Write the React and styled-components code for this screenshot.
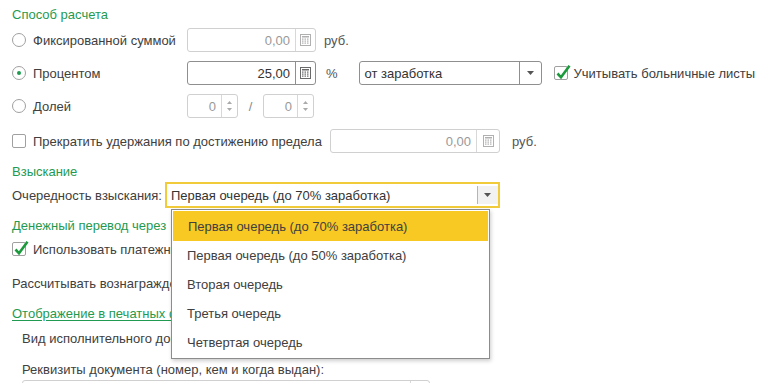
import React from 'react';
import styled, { createGlobalStyle } from 'styled-components';

const GlobalStyle = createGlobalStyle`
  html, body {
    margin: 0;
    padding: 0;
    background: #fff;
    overflow: hidden;
  }
  body {
    font-family: 'Liberation Sans', Arial, sans-serif;
    font-size: 13px;
    color: #404040;
  }
`;

const Page = styled.div`
  width: 780px;
  height: 383px;
  padding-left: 12px;
  box-sizing: border-box;
  overflow: hidden;
`;

const Row = styled.div`
  display: flex;
  align-items: center;
  height: ${(p) => p.$h || 24}px;
  margin-top: ${(p) => p.$mt || 0}px;
  padding-left: ${(p) => p.$indent || 0}px;
  white-space: nowrap;
  position: relative;
`;

const Heading = styled.div`
  color: #1f9a50;
  line-height: 18px;
  height: 18px;
  margin-top: ${(p) => p.$mt || 0}px;
  white-space: nowrap;
  ${(p) => p.$link && 'text-decoration: underline; text-underline-offset: 2px;'}
`;

const LabelCol = styled.div`
  display: flex;
  align-items: center;
  gap: 7px;
  width: ${(p) => p.$w || 175}px;
  flex-shrink: 0;
`;

const Radio = styled.span`
  width: 14px;
  height: 14px;
  box-sizing: border-box;
  border: 1px solid #a0a0a0;
  border-radius: 50%;
  display: inline-flex;
  align-items: center;
  justify-content: center;
  background: #fff;
  flex-shrink: 0;
  &::after {
    content: '';
    display: ${(p) => (p.$on ? 'block' : 'none')};
    width: 4px;
    height: 4px;
    border-radius: 50%;
    background: #1f9a50;
  }
`;

const Box = styled.span`
  width: 14px;
  height: 14px;
  box-sizing: border-box;
  border: 1px solid #a0a0a0;
  border-radius: 2px;
  background: #fff;
  position: relative;
  flex-shrink: 0;
  svg {
    position: absolute;
    left: 0px;
    top: -3px;
  }
`;

const Field = styled.div`
  display: flex;
  align-items: stretch;
  width: ${(p) => p.$w}px;
  height: 24px;
  box-sizing: border-box;
  border: 1px solid ${(p) => (p.$active ? '#8f8f8f' : '#d0d0d0')};
  border-radius: 3px;
  background: #fff;
  flex-shrink: 0;
`;

const Value = styled.div`
  flex: 1;
  display: flex;
  align-items: center;
  justify-content: ${(p) => (p.$left ? 'flex-start' : 'flex-end')};
  padding: 0 5px;
  color: ${(p) => (p.$active ? '#333' : '#999')};
  overflow: hidden;
`;

const SideBtn = styled.div`
  width: ${(p) => p.$w || 19}px;
  border-left: 1px solid ${(p) => (p.$active ? '#8f8f8f' : '#d8d8d8')};
  display: flex;
  flex-direction: ${(p) => (p.$col ? 'column' : 'row')};
  align-items: center;
  justify-content: center;
  background: ${(p) => p.$bg || 'transparent'};
  gap: 4px;
`;

const Unit = styled.span`
  margin-left: ${(p) => p.$ml}px;
  color: #555;
`;

const Slash = styled.span`
  color: #888;
  width: 25px;
  text-align: center;
`;

const FocusSelect = styled.div`
  position: relative;
  display: flex;
  width: 335px;
  height: 26px;
  box-sizing: border-box;
  border: 2px solid #f2cb3a;
  background: #fff;
  margin-left: 3px;
`;

const Dropdown = styled.div`
  position: absolute;
  left: 4px;
  top: 25px;
  width: 319px;
  box-sizing: border-box;
  border: 1px solid #8c8c8c;
  background: #fff;
  box-shadow: 1px 2px 4px rgba(0, 0, 0, 0.2);
  padding: 1px 0 1px;
  z-index: 5;
`;

const Item = styled.div`
  height: ${(p) => (p.$first ? 30 : 29)}px;
  display: flex;
  align-items: center;
  padding-left: 15px;
  background: ${(p) => (p.$sel ? '#f8c823' : '#fff')};
  color: #404040;
  margin: ${(p) => (p.$sel ? '0 1px' : '0')};
`;

const CalcIcon = ({ active }) => {
  const c = active ? '#6a6a6a' : '#b0b0b0';
  const dots = [];
  for (let r = 0; r < 3; r++) {
    for (let k = 0; k < 3; k++) {
      dots.push(<rect key={`${r}${k}`} x={2 + k * 2.5} y={4.5 + r * 2} width="1.5" height="1.2" fill={c} />);
    }
  }
  return (
    <svg width="11" height="12" viewBox="0 0 11 12">
      <rect x="0.5" y="0.5" width="10" height="11" fill="none" stroke={c} />
      <rect x="2" y="2" width="7" height="1.5" fill={c} />
      {dots}
    </svg>
  );
};

const Arrow = () => (
  <svg width="7" height="4" viewBox="0 0 7 4">
    <path d="M0 0h7L3.5 4z" fill="#555" />
  </svg>
);

const SpinArrows = () => (
  <>
    <svg width="5" height="3" viewBox="0 0 5 3">
      <path d="M0 3h5L2.5 0z" fill="#aaa" />
    </svg>
    <svg width="5" height="3" viewBox="0 0 5 3">
      <path d="M0 0h5L2.5 3z" fill="#aaa" />
    </svg>
  </>
);

const Check = () => (
  <svg width="17" height="17" viewBox="0 0 17 17">
    <path d="M2.5 9.5l3.5 3.8L14.5 1.8" fill="none" stroke="#1b9a3c" strokeWidth="2.6" strokeLinejoin="miter" />
  </svg>
);

const Spin = () => (
  <Field $w={51}>
    <Value>0</Value>
    <SideBtn $w={15} $col>
      <SpinArrows />
    </SideBtn>
  </Field>
);

const options = [
  'Первая очередь (до 70% заработка)',
  'Первая очередь (до 50% заработка)',
  'Вторая очередь',
  'Третья очередь',
  'Четвертая очередь',
];

export default function App() {
  return (
    <Page>
      <GlobalStyle />
      <Heading $mt={6}>Способ расчета</Heading>

      <Row $mt={4}>
        <LabelCol>
          <Radio />
          Фиксированной суммой
        </LabelCol>
        <Field $w={129}>
          <Value>0,00</Value>
          <SideBtn>
            <CalcIcon />
          </SideBtn>
        </Field>
        <Unit $ml={8}>руб.</Unit>
      </Row>

      <Row $mt={9}>
        <LabelCol>
          <Radio $on />
          Процентом
        </LabelCol>
        <Field $w={129} $active>
          <Value $active>25,00</Value>
          <SideBtn $active>
            <CalcIcon active />
          </SideBtn>
        </Field>
        <Unit $ml={10}>%</Unit>
        <Field $w={183} $active style={{ marginLeft: 21 }}>
          <Value $left $active>от заработка</Value>
          <SideBtn $active $w={21}>
            <Arrow />
          </SideBtn>
        </Field>
        <LabelCol $w={220} style={{ marginLeft: 12 }}>
          <Box>
            <Check />
          </Box>
          <span style={{ marginLeft: -1 }}>Учитывать больничные листы</span>
        </LabelCol>
      </Row>

      <Row $mt={9}>
        <LabelCol>
          <Radio />
          Долей
        </LabelCol>
        <Spin />
        <Slash>/</Slash>
        <Spin />
      </Row>

      <Row $mt={11}>
        <LabelCol $w={318}>
          <Box />
          Прекратить удержания по достижению предела
        </LabelCol>
        <Field $w={170}>
          <Value>0,00</Value>
          <SideBtn $w={22}>
            <CalcIcon />
          </SideBtn>
        </Field>
        <Unit $ml={12}>руб.</Unit>
      </Row>

      <Heading $mt={10}>Взыскание</Heading>

      <Row $mt={1} $h={26}>
        <span>Очередность взыскания:</span>
        <FocusSelect>
          <Value $left $active style={{ paddingLeft: 4 }}>
            Первая очередь (до 70% заработка)
          </Value>
          <SideBtn $w={20} $active $bg="#f2f2f2" style={{ margin: '2px 0', borderLeftColor: '#b5b5b5' }}>
            <Arrow />
          </SideBtn>
          <Dropdown>
            {options.map((o, i) => (
              <Item key={o} $sel={i === 0} $first={i === 0}>
                {o}
              </Item>
            ))}
          </Dropdown>
        </FocusSelect>
      </Row>

      <Heading $mt={9}>Денежный перевод через</Heading>

      <Row $mt={5} $h={18}>
        <LabelCol $w={300}>
          <Box>
            <Check />
          </Box>
          Использовать платежный агент
        </LabelCol>
      </Row>

      <Row $mt={16} $h={18}>Рассчитывать вознаграждение</Row>

      <Heading $mt={13} $link>Отображение в печатных формах</Heading>

      <Row $mt={6} $h={18} $indent={10}>Вид исполнительного документа</Row>

      <Row $mt={13} $h={18} $indent={10}>Реквизиты документа (номер, кем и когда выдан):</Row>

      <Row $mt={2} $indent={10}>
        <Field $w={408}>
          <Value $left />
          <SideBtn $w={18} />
        </Field>
      </Row>
    </Page>
  );
}
